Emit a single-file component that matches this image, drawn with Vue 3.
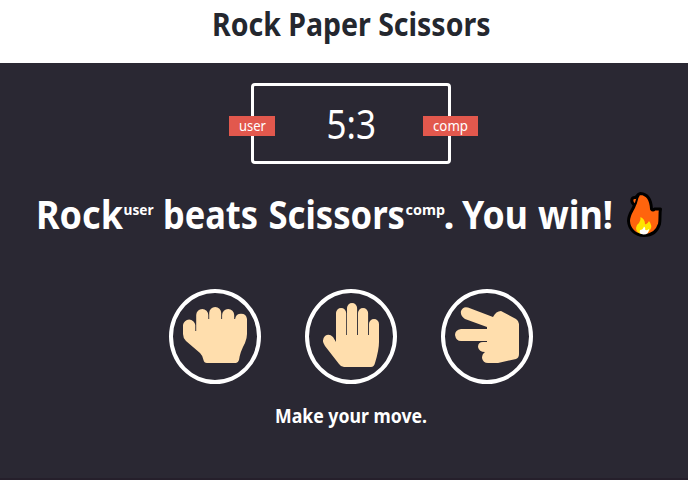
<script setup>
const headline = [
  { text: 'Rock', x: 36, w: 87 },
  { text: 'user', x: 123.5, w: 30, small: true },
  { text: 'beats', x: 163, w: 95 },
  { text: 'Scissors', x: 268.5, w: 136.5 },
  { text: 'comp', x: 405.5, w: 39.5, small: true },
  { text: '.', x: 443.5, w: 11 },
  { text: 'You', x: 462, w: 66 },
  { text: 'win!', x: 538, w: 75 }
]
const choices = [
  {
    name: 'rock',
    paths: ['M18 40A6.200 6.200 0 0 1 30.300 40V46H31.200V30A6 6 0 0 1 43.300 30V34H44.200V28A6 6 0 0 1 56.200 28V34H57.100V30A6 6 0 0 1 69.200 30V34H70.100A6 6 0 0 1 82 34V49Q82 53 80 58Q75 67 74 75Q73 78 71 78H42Q39 78 38.500 75Q38 71 35 68L21 56Q18 53 18 49Z']
  },
  {
    name: 'paper',
    paths: ['M36 57V28A5 5 0 0 1 46.200 28V50H47V23A5 5 0 0 1 57.100 23V50H58V28A5 5 0 0 1 68.100 28V50H69V39A5 5 0 0 1 79 39V57Q79 65 75 78Q74 82 71 82H44Q41 82 39 79L25 61Q21 55 25 51Q29 48 33 52Z']
  },
  {
    name: 'scissors',
    paths: ['M31 22.500L56 32Q59 26 64 26L79 34Q82 36 82 39V69Q82 73 79 74L61 78H51Q46 78 45 73Q45 69 48 67Q42 67 41 62Q41 57 46 57H50V56H24Q19 56 18 50Q18 45 24 44H50V42L28 34Q23 31 24 26Q26 21 31 22.500Z']
  }
]
</script>

<template>
  <div class="game">
    <header>
      <svg class="line" width="688" height="63" role="heading">
        <text class="title" x="212" y="35.500" textLength="278.500" lengthAdjust="spacingAndGlyphs">Rock Paper Scissors</text>
      </svg>
    </header>
    <main>
      <section class="scoreboard">
        <div class="badge user">
          <svg width="46" height="20"><text x="10" y="15" textLength="27" lengthAdjust="spacingAndGlyphs">user</text></svg>
        </div>
        <svg class="score" width="194" height="75">
          <text x="72.500" y="52.500" textLength="49.500" lengthAdjust="spacingAndGlyphs">5:3</text>
        </svg>
        <div class="badge comp">
          <svg width="55" height="20"><text x="10" y="15" textLength="35" lengthAdjust="spacingAndGlyphs">comp</text></svg>
        </div>
      </section>
      <section class="result">
        <svg width="688" height="60">
          <text v-for="part in headline" :key="part.text" :class="part.small ? 'small' : 'big'" :x="part.x" :y="part.small ? 30 : 44" :textLength="part.w" lengthAdjust="spacingAndGlyphs">{{ part.text }}</text>
          <g transform="translate(615 0)">
            <path d="M25.500 8.500C32 9 36 14 36.500 24Q38 26 39.500 24H45.500C44.500 29 45.500 33 44.500 39C42 47 36 50.500 29 50.500C20 50.500 14 44 13.500 36C13.500 29 18 25 19.500 20C15.500 17 16 12 20.500 12.500C22 12 22 9 25.500 8.500Z" fill="#ff640d" stroke="#000" stroke-width="3" stroke-linejoin="round" />
            <path d="M24 10C21 14 22 17 20 20" fill="none" stroke="#000" stroke-width="2" />
            <path d="M25.500 32Q30 34 30 39Q32 40 34 36Q38 41 35 45Q32 49.500 27 49Q21 48 21 43Q21 40 24 38Q26 35 25.500 32Z" fill="#ffe300" />
            <path d="M29 41.500Q31 43 30 44.500Q32 46 34 44Q34 49.500 28.500 49.500Q23.500 49 25 45Q28 45 29 41.500Z" fill="#fff" />
          </g>
        </svg>
      </section>
      <section class="choices">
        <div v-for="choice in choices" :key="choice.name" class="choice">
          <svg width="100" height="105" viewBox="0 0 100 105">
            <path v-for="d in choice.paths" :key="d" :d="d" fill="#ffdead" />
          </svg>
        </div>
      </section>
      <svg class="prompt" width="688" height="40">
        <text x="275" y="28" textLength="152" lengthAdjust="spacingAndGlyphs">Make your move.</text>
      </svg>
    </main>
  </div>
</template>

<style>
body { margin: 0; background: #2a2833; }
</style>
<style scoped>
.game { width: 688px; height: 480px; overflow: hidden; font-family: "Noto Sans", "Open Sans", sans-serif; background: #2a2833; }
svg { display: block; }
header { height: 63px; background: #fff; }
.title { font-size: 31.500px; font-weight: 700; fill: #24272e; }
main { display: flex; flex-direction: column; height: 417px; box-sizing: border-box; padding-top: 20px; border-bottom: 2px solid #251f2b; }
.scoreboard { position: relative; box-sizing: border-box; width: 200px; height: 81px; margin-left: 251px; border: 3px solid #fff; border-radius: 4px; flex: none; }
.score { font-size: 40px; fill: #fff; }
.badge { position: absolute; top: 30px; height: 20px; background: #e2584d; font-size: 13.500px; fill: #fff; }
.user { left: -25px; }
.comp { right: -30px; }
.result { margin-top: 21px; height: 60px; fill: #fff; font-weight: 700; flex: none; }
.big { font-size: 40px; }
.small { font-size: 15px; }
.choices { display: flex; gap: 44px; margin: 44px 0 0 169px; }
.choice { box-sizing: border-box; width: 92px; height: 95px; border: 4px solid #fff; border-radius: 50%; }
.choice svg { margin: -8px 0 0 -8px; }
.choice:nth-child(2) svg { margin-left: -9px; }
.prompt { margin-top: 11px; fill: #fff; font-size: 20px; font-weight: 700; flex: none; }
</style>
